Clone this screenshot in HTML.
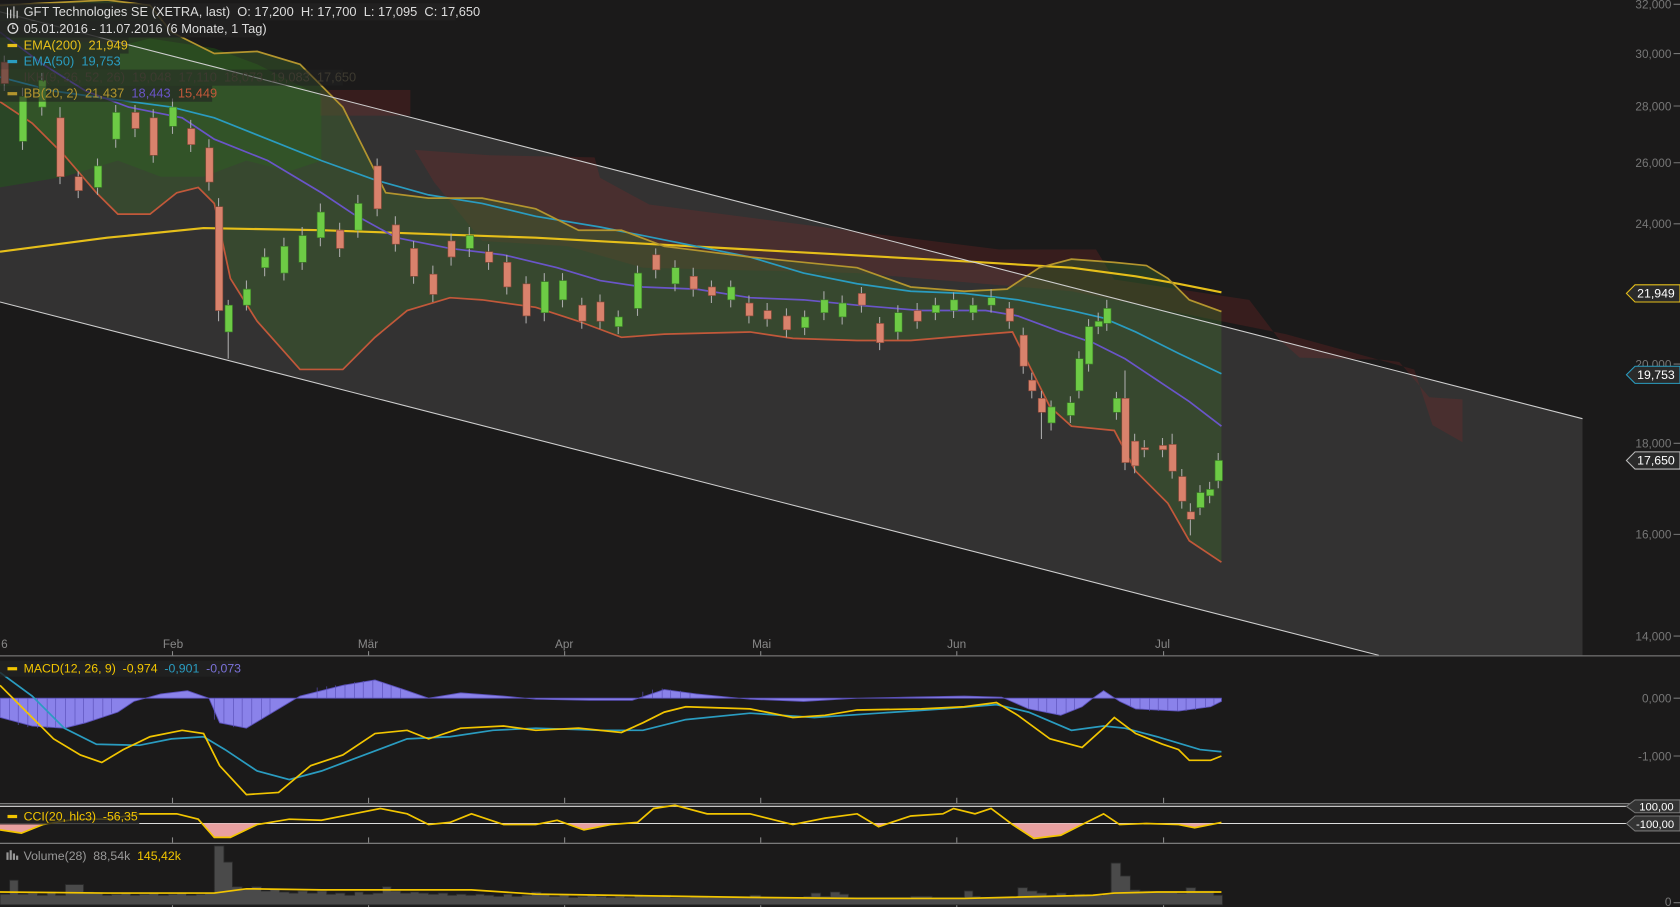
<!DOCTYPE html>
<html><head><meta charset="utf-8"><style>
html,body{margin:0;padding:0;background:#1b1a1a;overflow:hidden}
svg{display:block}
text{font-family:"Liberation Sans","DejaVu Sans",sans-serif;white-space:pre}
</style></head><body>
<svg width="1680" height="907" viewBox="0 0 1568 847" preserveAspectRatio="none" xmlns="http://www.w3.org/2000/svg" xml:space="preserve">
<rect width="1568" height="847" fill="#1b1a1a"/>
<defs>
<clipPath id="mainclip"><rect x="0" y="0" width="1568" height="612"/></clipPath>
<clipPath id="cciclip"><rect x="0" y="769" width="1568" height="20"/></clipPath>
</defs>
<g clip-path="url(#mainclip)">
<polygon points="0,11 1477,391 1477,612 1287,612 0,282" fill="#333232"/>
<polygon points="0,30 60,38 115,42 140,36 200,45 240,60 270,75 300,90 300,150 270,160 230,150 190,165 150,165 110,150 60,165 0,175" fill="rgb(30,100,20)" opacity="0.4"/>
<rect x="299" y="84" width="84" height="24" fill="rgb(140,40,40)" opacity="0.25"/>
<polygon points="387,140 457,145 555,147 560,166 606,191 821,219 933,233 1023,233 1040,261 1166,280 1194,317 1213,334 1290,336 1306,338 1334,371 1365,373 1365,413 1337,397 1320,345 1200,312 1140,300 1000,272 800,255 600,250 530,230 450,225 405,170" fill="rgb(140,40,40)" opacity="0.25"/>
<polygon fill="rgb(60,100,45)" opacity="0.45" points="0,5 100,0 140,5 160,30 200,50 240,48 280,60 320,100 340,140 360,180 400,185 450,185 500,195 540,215 580,215 620,230 700,240 800,250 850,268 900,272 940,270 970,250 1000,242 1040,245 1070,248 1090,260 1110,280 1140,291 1140,525 1110,505 1090,470 1060,440 1040,402 1000,398 980,380 960,340 945,310 920,312 850,318 800,318 740,316 700,310 620,312 580,315 540,300 500,287 450,280 420,278 380,290 350,315 320,345 280,345 240,300 215,260 200,190 185,175 165,180 140,200 110,200 90,180 60,145 30,115 0,95"/>
<polyline fill="none" stroke="#e6bf1a" stroke-width="2" points="0,235 100,222 190,213 300,215 500,222 700,233 900,244 1000,250 1060,258 1100,265 1140,273"/>
<polyline fill="none" stroke="#2a9cc0" stroke-width="1.6" points="0,72 50,85 100,92 160,100 200,110 250,130 300,150 350,168 400,182 450,190 500,202 560,212 600,220 650,230 700,240 750,255 800,265 850,272 900,274 950,280 1000,290 1030,297 1060,310 1100,330 1140,349"/>
<polyline fill="none" stroke="#b3952e" stroke-width="1.6" points="0,5 100,0 140,5 160,30 200,50 240,48 280,60 320,100 340,140 360,180 400,185 450,185 500,195 540,215 580,215 620,230 700,240 800,250 850,268 900,272 940,270 970,250 1000,242 1040,245 1070,248 1090,260 1110,280 1140,291"/>
<polyline fill="none" stroke="#6a55c9" stroke-width="1.6" points="0,30 40,60 80,85 120,100 170,110 200,130 250,150 300,180 330,200 370,222 420,232 470,238 520,250 560,262 600,268 650,270 700,278 750,280 800,285 860,290 920,290 950,295 990,310 1020,320 1050,335 1080,355 1110,375 1140,398"/>
<polyline fill="none" stroke="#c2583a" stroke-width="1.6" points="0,95 30,115 60,145 90,180 110,200 140,200 165,180 185,175 200,190 215,260 240,300 280,345 320,345 350,315 380,290 420,278 450,280 500,287 540,300 580,315 620,312 700,310 740,316 800,318 850,318 920,312 945,310 960,340 980,380 1000,398 1040,402 1060,440 1090,470 1110,505 1140,525"/>
<line x1="0" y1="11" x2="1477" y2="391" stroke="#cfcfcf" stroke-width="1"/>
<line x1="0" y1="282" x2="1287" y2="612" stroke="#cfcfcf" stroke-width="1"/>
<path stroke="#aaa" stroke-width="1" fill="none" d="M4 52V85M21 82V140M39 68V108M56 100V172M73 160V185M91 148V182M108 98V138M126 98V128M143 102V152M161 92V125M178 112V142M195 130V178M204 185V300M213 280V335M230 262V290M247 232V258M265 222V262M282 212V252M299 190V230M317 208V240M334 182V222M352 148V202M369 202V235M386 225V265M404 248V282M421 218V248M438 212V240M456 228V252M473 238V275M491 258V302M508 255V300M525 255V287M543 278V307M560 275V307M577 290V312M595 248V295M612 232V260M630 243V272M647 250V277M664 262V283M682 262V287M699 276V302M716 283V305M734 288V315M751 290V313M769 272V299M786 276V303M804 268V292M821 296V327M838 285V317M856 283V307M873 278V299M890 273V297M908 278V299M925 270V292M942 282V307M955 306V349M963 348V372M972 365V410M981 374V402M999 370V395M1007 328V372M1016 298V347M1025 292V312M1033 280V309M1042 366V392M1050 346V439M1059 405V442M1068 411V427M1085 409V427M1094 405V447M1103 438V475M1111 470V500M1120 453V481M1129 450V470M1137 423V456"/>
<path fill="#6dcb45" stroke="#3c7a28" stroke-width="0.6" d="M18 90h7v42h-7zM36 75h7v25h-7zM88 155h7v20h-7zM105 105h7v25h-7zM158 100h7v18h-7zM210 285h7v25h-7zM227 270h7v15h-7zM244 240h7v10h-7zM262 230h7v25h-7zM279 220h7v25h-7zM296 198h7v24h-7zM331 190h7v25h-7zM435 220h7v12h-7zM505 263h7v29h-7zM522 262h7v18h-7zM574 296h7v9h-7zM592 255h7v33h-7zM627 250h7v15h-7zM679 268h7v12h-7zM748 296h7v10h-7zM766 280h7v12h-7zM783 283h7v13h-7zM835 292h7v18h-7zM870 285h7v7h-7zM887 280h7v10h-7zM905 285h7v7h-7zM922 278h7v7h-7zM978 380h7v15h-7zM996 376h7v12h-7zM1004 335h7v30h-7zM1013 305h7v35h-7zM1022 300h7v5h-7zM1030 288h7v14h-7zM1039 372h7v13h-7zM1117 460h7v14h-7zM1126 457h7v6h-7zM1134 430h7v19h-7z"/>
<path fill="#d9826c" stroke="#8a4a3a" stroke-width="0.6" d="M1 58h7v20h-7zM53 110h7v55h-7zM70 165h7v13h-7zM123 105h7v15h-7zM140 110h7v35h-7zM175 120h7v15h-7zM192 138h7v32h-7zM201 193h7v97h-7zM314 215h7v17h-7zM349 155h7v40h-7zM366 210h7v18h-7zM383 232h7v26h-7zM401 256h7v19h-7zM418 225h7v15h-7zM453 235h7v10h-7zM470 245h7v23h-7zM488 265h7v30h-7zM540 285h7v15h-7zM557 282h7v18h-7zM609 238h7v14h-7zM644 258h7v12h-7zM661 268h7v8h-7zM696 283h7v12h-7zM713 290h7v8h-7zM731 295h7v13h-7zM801 274h7v11h-7zM818 302h7v18h-7zM853 290h7v10h-7zM939 288h7v12h-7zM952 313h7v29h-7zM960 355h7v10h-7zM969 372h7v13h-7zM1047 372h7v60h-7zM1056 412h7v23h-7zM1065 418h7v2h-7zM1082 416h7v4h-7zM1091 415h7v25h-7zM1100 445h7v23h-7zM1108 478h7v7h-7z"/>
</g>
<rect x="0" y="3" width="425" height="16" fill="#222" opacity="0.85"/>
<g stroke="#ddd" stroke-width="1"><path d="M7 7v10M10 9v8M13 6v11M16 10v7"/></g>
<text x="22" y="15" font-size="12" fill="#ddd">GFT Technologies SE (XETRA, last)  O: 17,200  H: 17,700  L: 17,095  C: 17,650</text>
<rect x="0" y="19" width="243" height="16" fill="#222" opacity="0.85"/>
<circle cx="12" cy="26.5" r="4.5" fill="none" stroke="#ddd" stroke-width="1.2"/><path d="M12 23.5v3h2" stroke="#ddd" fill="none"/>
<text x="22" y="31" font-size="12" fill="#ddd">05.01.2016 - 11.07.2016 (6 Monate, 1 Tag)</text>
<rect x="0" y="35" width="120" height="15" fill="#222" opacity="0.6"/>
<rect x="7" y="41" width="9" height="3" fill="#e6bf1a"/><text x="22" y="46" font-size="12" fill="#e6bf1a">EMA(200)  21,949</text>
<rect x="0" y="50" width="112" height="15" fill="#222" opacity="0.6"/>
<rect x="7" y="56" width="9" height="3" fill="#2a9cc0"/><text x="22" y="61" font-size="12" fill="#2a9cc0">EMA(50)  19,753</text>
<rect x="0" y="65" width="320" height="15" fill="#222" opacity="0.5"/>
<text x="22" y="76" font-size="12" fill="#3d3a30">IKH(9, 26, 52, 26)  19,048  17,110  18,073  19,083  17,650</text>
<rect x="0" y="80" width="198" height="15" fill="#222" opacity="0.6"/>
<rect x="7" y="86" width="9" height="3" fill="#b3952e"/><text x="22" y="91" font-size="12" fill="#b3952e">BB(20, 2)  21,437  <tspan fill="#6a55c9">18,443</tspan>  <tspan fill="#c2583a">15,449</tspan></text>
<g font-size="11" fill="#777" text-anchor="end">
<text x="1560" y="8">32,000</text><text x="1560" y="54">30,000</text><text x="1560" y="103">28,000</text><text x="1560" y="156">26,000</text><text x="1560" y="213">24,000</text><text x="1560" y="344">20,000</text><text x="1560" y="418">18,000</text><text x="1560" y="503">16,000</text><text x="1560" y="598">14,000</text>
<text x="1560" y="656">0,000</text><text x="1560" y="710">-1,000</text><text x="1560" y="846">0</text>
</g>
<g stroke="#777"><path d="M1562 4h6M1562 50h6M1562 99h6M1562 152h6M1562 209h6M1562 340h6M1562 414h6M1562 499h6M1562 594h6M1562 652h6M1562 706h6M1562 843h6"/></g>
<g font-size="11.5">
<polygon points="1518,274 1526,266 1568,266 1568,282 1526,282" fill="#2a2a2a" stroke="#e6bf1a"/><text x="1528" y="278" fill="#fff">21,949</text>
<polygon points="1518,350 1526,342 1568,342 1568,358 1526,358" fill="#2a2a2a" stroke="#2a9cc0"/><text x="1528" y="354" fill="#fff">19,753</text>
<polygon points="1518,430 1526,422 1568,422 1568,438 1526,438" fill="#2a2a2a" stroke="#bbb"/><text x="1528" y="434" fill="#fff">17,650</text>
</g>
<g font-size="11" fill="#888"><text x="1" y="605">6</text><text x="152" y="605">Feb</text><text x="334" y="605">Mär</text><text x="518" y="605">Apr</text><text x="702" y="605">Mai</text><text x="884" y="605">Jun</text><text x="1078" y="605">Jul</text></g>
<path stroke="#888" d="M161 745v5M344 745v5M527 745v5M710 745v5M893 745v5M1086 745v5M161 782v5M344 782v5M527 782v5M710 782v5M893 782v5M1086 782v5M161 842v5M344 842v5M527 842v5M710 842v5M893 842v5M1086 842v5M161 608v4M344 608v4M527 608v4M710 608v4M893 608v4M1086 608v4"/>
<line x1="0" y1="612.5" x2="1568" y2="612.5" stroke="#888"/>
<line x1="0" y1="750.5" x2="1568" y2="750.5" stroke="#888"/>
<line x1="0" y1="787.5" x2="1568" y2="787.5" stroke="#888"/>
<polygon fill="#8a82ea" stroke="#5a50b8" stroke-width="0.8" points="0,652 0,670 30,678 60,680 80,675 110,665 125,655 150,648 175,645 195,652 205,675 230,680 260,662 280,650 320,640 350,635 380,645 400,652 430,647 470,650 500,653 550,654 590,654 620,644 650,648 700,653 750,655 800,652 850,651 900,650 935,651 960,662 990,668 1010,660 1020,652 1030,645 1045,655 1060,662 1100,664 1130,660 1140,655 1140,652"/>
<path stroke="#5a50b8" stroke-width="0.6" d="M9 652v20M17 652v25M26 652v27M35 652v28M44 652v28M52 652v28M61 652v28M70 652v26M78 652v24M87 652v21M96 652v18M104 652v14M200 652v20M209 652v24M218 652v27M226 652v27M235 652v25M244 652v20M252 652v15M296 652v-10M305 652v-11M313 652v-12M322 652v-13M331 652v-15M339 652v-16M348 652v-17M357 652v-15M365 652v-12M374 652v-9M600 652v-6M609 652v-8M618 652v-9M626 652v-8M635 652v-7M644 652v-5M960 652v10M969 652v12M977 652v14M986 652v15M995 652v14M1003 652v11M1055 652v8M1064 652v10M1073 652v12M1081 652v12M1090 652v12M1099 652v12M1107 652v12M1116 652v11M1125 652v9M1133 652v6"/>
<polyline fill="none" stroke="#2a9cc0" stroke-width="1.6" points="0,628 30,650 60,680 90,695 130,696 160,690 190,688 210,700 240,720 270,728 300,720 340,705 380,690 420,688 460,682 500,680 560,682 600,682 640,672 700,666 760,670 820,666 880,662 930,658 960,665 1000,682 1030,678 1050,680 1080,688 1120,700 1140,702"/>
<polyline fill="none" stroke="#f2c500" stroke-width="1.6" points="0,640 20,660 50,690 75,705 95,712 115,700 140,688 170,682 190,685 205,715 230,742 260,740 290,715 320,705 350,685 380,682 400,690 430,680 470,678 500,682 540,680 580,684 600,675 620,665 640,660 700,662 740,670 770,668 800,663 860,662 900,660 930,656 950,668 980,690 1010,698 1030,680 1040,670 1060,685 1085,695 1100,700 1110,710 1130,710 1140,706"/>
<rect x="0" y="617" width="222" height="15" fill="#222" opacity="0.8"/>
<rect x="7" y="623" width="9" height="3" fill="#f2c500"/><text x="22" y="628" font-size="11.5" fill="#f2c500">MACD(12, 26, 9)  -0,974  <tspan fill="#2a9cc0">-0,901</tspan>  <tspan fill="#7b72d9">-0,073</tspan></text>
<line x1="0" y1="753" x2="1520" y2="753" stroke="#ddd"/>
<line x1="0" y1="769" x2="1520" y2="769" stroke="#ddd"/>
<polygon clip-path="url(#cciclip)" fill="#e8a0a0" points="0,769 0,775 20,778 40,770 70,765 100,765 130,760 165,760 185,765 200,782 215,782 240,770 270,765 300,766 330,760 355,755 380,760 400,770 420,768 440,760 470,770 500,770 520,766 545,775 570,770 595,768 610,755 630,752 660,760 700,760 740,770 770,764 800,760 820,772 850,762 880,760 890,755 910,760 925,755 945,770 965,783 990,780 1010,770 1030,760 1045,770 1070,769 1100,770 1115,773 1140,768 1140,769"/>
<polyline fill="none" stroke="#f2c500" stroke-width="1.6" points="0,775 20,778 40,770 70,765 100,765 130,760 165,760 185,765 200,782 215,782 240,770 270,765 300,766 330,760 355,755 380,760 400,770 420,768 440,760 470,770 500,770 520,766 545,775 570,770 595,768 610,755 630,752 660,760 700,760 740,770 770,764 800,760 820,772 850,762 880,760 890,755 910,760 925,755 945,770 965,783 990,780 1010,770 1030,760 1045,770 1070,769 1100,770 1115,773 1140,768"/>
<g font-size="10.5">
<polygon points="1518,753 1526,747 1568,747 1568,759 1526,759" fill="#333" stroke="#777"/><text x="1530" y="757" fill="#fff">100,00</text>
<polygon points="1518,769 1526,762 1568,762 1568,776 1526,776" fill="#333" stroke="#777"/><text x="1527" y="773" fill="#fff">-100,00</text>
</g>
<rect x="0" y="756" width="130" height="14" fill="#222" opacity="0.8"/>
<rect x="7" y="761" width="9" height="3" fill="#f2c500"/><text x="22" y="766" font-size="11.5" fill="#f2c500">CCI(20, hlc3)  -56,35</text>
<path fill="#4a4a4a" stroke="#2a2a2a" stroke-width="0.8" d="M0 845V835H9V822H17V835H26V834H35V836H44V833H52V836H61V826H70V826H78V833H87V834H96V836H104V835H113V834H122V836H130V835H139V834H148V836H157V835H165V834H174V836H183V835H191V834H200V790H209V805H217V828H226V830H235V828H244V832H252V830H261V833H270V834H278V832H287V834H296V832H305V835H313V834H322V836H331V833H339V835H348V834H357V828H365V832H374V834H383V833H391V834H400V835H409V834H418V836H426V835H435V836H444V835H452V836H461V837H470V835H478V837H487V836H496V833H505V835H513V837H522V836H531V838H539V837H548V836H557V837H566V838H574V837H583V838H592V836H600V837H618V836H626V838H644V837H661V838H700V836H710V838H750V837H757V834H766V837H775V833H784V835H792V838H800V838H850V837H870V838H900V832H908V837H915V838H950V829H959V832H968V834H977V836H986V834H995V837H1003V835H1012V836H1020V836H1029V835H1037V806H1046V818H1055V831H1064V832H1073V833H1081V833H1090V833H1099V834H1107V829H1116V832H1125V832H1133V836H1141V845Z"/>
<polyline fill="none" stroke="#f2c500" stroke-width="1.6" points="0,833 100,834 200,834 230,830 300,831 440,831 500,835 700,838 800,839 900,839 1020,836 1040,834 1080,833 1140,833"/>
<text x="22" y="803" font-size="11.5" fill="#999">Volume(28)  88,54k  <tspan fill="#f2c500">145,42k</tspan></text>
<g fill="#999"><rect x="6" y="796" width="2" height="7"/><rect x="9" y="794" width="2" height="9"/><rect x="12" y="797" width="2" height="6"/><rect x="15" y="799" width="2" height="4"/></g>
</svg>
</body></html>
